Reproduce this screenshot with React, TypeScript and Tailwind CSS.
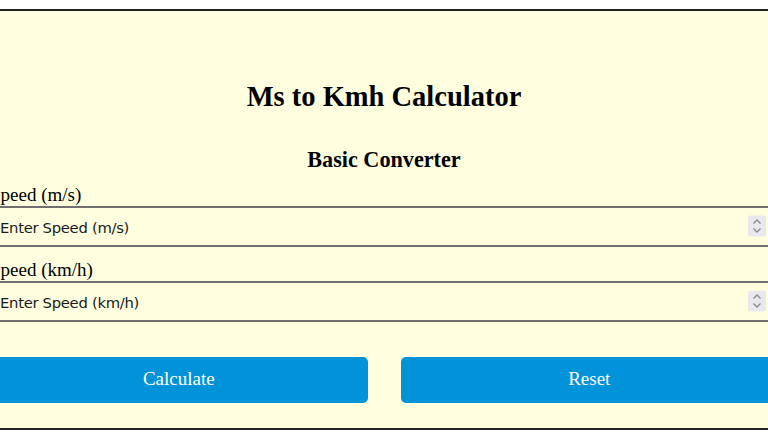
import React, { useState } from "react";

const serif = { fontFamily: '"Liberation Serif", "Times New Roman", serif' };

function Spinner() {
  return (
    <div className="pointer-events-none absolute right-[12px] top-1/2 flex h-[21px] w-[18px] -translate-y-1/2 flex-col items-center justify-center gap-[3px] rounded-[2px] bg-[#e9e9ed]">
      <svg width="10" height="6" viewBox="0 0 10 6" fill="none">
        <path d="M1.5 5 L5 1.5 L8.5 5" stroke="#8a8a8e" strokeWidth="1.3" />
      </svg>
      <svg width="10" height="6" viewBox="0 0 10 6" fill="none">
        <path d="M1.5 1 L5 4.5 L8.5 1" stroke="#8a8a8e" strokeWidth="1.3" />
      </svg>
    </div>
  );
}

function SpeedField({ label, placeholder, value, onChange, className }: {
  label: string;
  placeholder: string;
  value: string;
  onChange: (v: string) => void;
  className?: string;
}) {
  return (
    <div className={className}>
      <label className="block text-[19px] leading-[22px] text-black">{label}</label>
      <div className="relative">
        <input
          type="number"
          value={value}
          onChange={(e) => onChange(e.target.value)}
          placeholder={placeholder}
          className="block h-[41px] w-full border-2 border-[#707070] bg-transparent pl-[8px] pr-[34px] pt-[2px] text-[14.8px] tracking-[-0.3px] text-black placeholder:text-[#1a1a1a] outline-none [appearance:textfield] [&::-webkit-inner-spin-button]:appearance-none [&::-webkit-outer-spin-button]:appearance-none"
          style={{ fontFamily: '"DejaVu Sans", Verdana, sans-serif' }}
        />
        <Spinner />
      </div>
    </div>
  );
}

export default function App() {
  const [ms, setMs] = useState("");
  const [kmh, setKmh] = useState("");

  const calculate = () => {
    if (ms !== "") setKmh(String(parseFloat(ms) * 3.6));
    else if (kmh !== "") setMs(String(parseFloat(kmh) / 3.6));
  };

  const reset = () => {
    setMs("");
    setKmh("");
  };

  return (
    <div className="min-h-screen overflow-hidden bg-white pt-[9px]" style={serif}>
      <div className="mx-[-30px] border-2 border-[#222] bg-[#ffffe0] px-[18px] pt-[69px] pb-[25px]">
        <h1 className="text-center text-[28.5px] leading-[33px] font-bold text-black">Ms to Kmh Calculator</h1>
        <h3 className="mt-[33.5px] text-center text-[22.2px] leading-[26px] font-bold text-black">Basic Converter</h3>
        <SpeedField
          className="mt-[11px]"
          label="Speed (m/s)"
          placeholder="Enter Speed (m/s)"
          value={ms}
          onChange={setMs}
        />
        <SpeedField
          className="mt-[12px]"
          label="Speed (km/h)"
          placeholder="Enter Speed (km/h)"
          value={kmh}
          onChange={setKmh}
        />
        <div className="mt-[35px] grid grid-cols-2 gap-[33px]">
          <button
            onClick={calculate}
            className="h-[46px] rounded-[5px] bg-[#0093d9] text-[19px] text-white"
          >
            Calculate
          </button>
          <button
            onClick={reset}
            className="h-[46px] rounded-[5px] bg-[#0093d9] text-[19px] text-white"
          >
            Reset
          </button>
        </div>
      </div>
    </div>
  );
}
